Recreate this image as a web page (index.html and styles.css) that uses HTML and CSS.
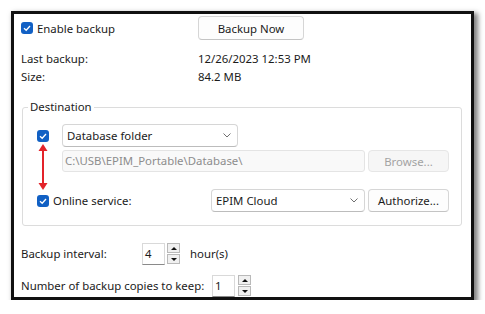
FILE: index.html
```html
<!DOCTYPE html>
<html lang="en">
<head>
  <meta charset="UTF-8" />
  <title>Backup settings</title>
  <link rel="stylesheet" href="styles.css">
</head>
<body>

  <div class="panel">

    <div class="summary">
      <label class="check">
        <span class="box"><svg viewBox="0 0 12 12"><polyline points="3,6.2 5.2,8.3 9,4" /></svg></span>
        Enable backup
      </label>
      <button class="btn now">Backup Now</button>

      <div class="info">Last backup:</div>
      <div class="info">12/26/2023 12:53 PM</div>
      <div class="info">Size:</div>
      <div class="info">84.2 MB</div>
    </div>

    <fieldset class="destination">
      <legend>Destination</legend>
      <div class="dest-rows">
        <div class="row">
          <span class="box"><svg viewBox="0 0 12 12"><polyline points="3,6.2 5.2,8.3 9,4" /></svg></span>
          <div class="select folder">
            <span>Database folder</span>
            <svg class="chev" viewBox="0 0 8 5"><polyline points="0.5,0.5 4,4 7.5,0.5" /></svg>
          </div>
        </div>

        <div class="row path-row">
          <div class="path">C:\USB\EPIM_Portable\Database\</div>
          <button class="btn browse" disabled>Browse...</button>
        </div>

        <div class="row online">
          <label class="check">
            <span class="box"><svg viewBox="0 0 12 12"><polyline points="3,6.2 5.2,8.3 9,4" /></svg></span>
            <span class="online-label">Online service:</span>
          </label>
          <div class="select cloud">
            <span>EPIM Cloud</span>
            <svg class="chev" viewBox="0 0 8 5"><polyline points="0.5,0.5 4,4 7.5,0.5" /></svg>
          </div>
          <button class="btn auth">Authorize...</button>
        </div>

        <!-- annotation arrow between the two checkboxes -->
        <svg class="arrow" viewBox="0 0 10 46">
          <polygon points="5,0 0.5,7 9.5,7" />
          <line x1="5" y1="6" x2="5" y2="40" />
          <polygon points="5,46 0.5,39 9.5,39" />
        </svg>
      </div>
    </fieldset>

    <div class="spin-row interval">
      <span class="spin-label">Backup interval:</span>
      <div class="spin-box">4</div>
      <div class="spinner">
        <span class="up"></span>
        <span class="down"></span>
      </div>
      <span class="unit">hour(s)</span>
    </div>

    <div class="spin-row copies">
      <span class="spin-label">Number of backup copies to keep:</span>
      <div class="spin-box">1</div>
      <div class="spinner">
        <span class="up"></span>
        <span class="down"></span>
      </div>
    </div>

  </div>

</body>
</html>
```

FILE: styles.css
```css
* {
  margin: 0;
  padding: 0;
  box-sizing: border-box;
  font-family: 'Noto Sans', 'Open Sans', sans-serif;
}
body {
  background: #fff;
  color: #1b1b1b;
  font-size: 11.4px;
}
.panel {
  margin: 11px 0 0 11px;
  width: 463px;
  height: 289px;
  border: 3px solid #111;
  background: #fff;
  box-shadow: 3px 3px 5px 1px rgba(0,0,0,0.5);
  overflow: hidden;
}

/* top block */
.summary {
  display: grid;
  grid-template-columns: 177px auto;
  align-items: center;
  padding: 2px 0 0 7px;
}
.check {
  display: flex;
  align-items: center;
  gap: 4px;
  white-space: nowrap;
}
.box {
  width: 12px;
  height: 12px;
  border-radius: 3px;
  background: #1160c4;
  display: flex;
  flex-shrink: 0;
}
.box svg {
  width: 12px;
  height: 12px;
  fill: none;
  stroke: #fff;
  stroke-width: 1.3;
}
.btn {
  height: 24px;
  border: 1px solid #d6d6d6;
  border-bottom-color: #c4c4c4;
  border-radius: 4px;
  background: #fdfdfd;
  color: #1b1b1b;
  font-size: 11.4px;
}
.now {
  width: 106px;
}
.info {
  line-height: 18px;
}
.summary .info:nth-child(3),
.summary .info:nth-child(4) {
  margin-top: 10px;
}

/* destination group */
.destination {
  margin: 13px 9px 0 8px;
  border: 1px solid #dcdcdc;
  border-radius: 3px;
  padding: 9px 0 13px 5px;
}
.destination legend {
  padding: 0 2px;
  line-height: 16px;
}
.dest-rows {
  position: relative;
  padding-left: 9px;
}
.row {
  display: flex;
  align-items: center;
}
.select {
  height: 23px;
  margin-left: 13px;
  border: 1px solid #d6d6d6;
  border-bottom-color: #bcbcbc;
  border-radius: 4px;
  background: #fff;
  display: flex;
  align-items: center;
  justify-content: space-between;
  padding: 0 6px 0 4px;
}
.folder {
  width: 176px;
}
.chev {
  width: 8px;
  height: 5px;
  fill: none;
  stroke: #707070;
  stroke-width: 1;
}
.path-row {
  margin-top: 3px;
  padding-left: 25px;
}
.path {
  width: 303px;
  height: 22px;
  line-height: 20px;
  padding-left: 2px;
  border: 1px solid #e4e4e4;
  border-radius: 3px;
  background: #f9f9f9;
  color: #8d8d8d;
}
.browse {
  width: 81px;
  height: 22px;
  margin-left: 3px;
  background: #f6f6f6;
  border-color: #e6e6e6;
  color: #a3a3a3;
}
.online {
  margin-top: 17px;
}
.online-label {
  width: 158px;
}
.online .select {
  margin-left: 0;
}
.cloud {
  width: 154px;
}
.auth {
  width: 81px;
  height: 23px;
  margin-left: 3px;
}
.arrow {
  position: absolute;
  left: 10px;
  top: 20px;
  width: 10px;
  height: 46px;
}
.arrow polygon {
  fill: #e3232a;
}
.arrow line {
  stroke: #e3232a;
  stroke-width: 2;
}

/* spin edits */
.spin-row {
  display: flex;
  align-items: flex-start;
  padding-left: 7px;
  white-space: nowrap;
}
.interval {
  margin-top: 17px;
}
.copies {
  margin-top: 10px;
}
.spin-label {
  line-height: 22px;
}
.interval .spin-label {
  width: 121px;
}
.copies .spin-label {
  width: 191px;
}
.spin-box {
  width: 23px;
  height: 22px;
  line-height: 20px;
  padding-left: 2px;
  border: 1px solid #d9d9d9;
  border-bottom-color: #8a8a8a;
  background: #fff;
}
.spinner {
  display: flex;
  flex-direction: column;
  gap: 1px;
  margin-left: 2px;
}
.copies .spinner {
  margin-left: 3px;
}
.spinner span {
  width: 13px;
  height: 10px;
  border: 1px solid #b9b9b9;
  background: #f0f0f0;
  display: flex;
  align-items: center;
  justify-content: center;
}
.spinner span::after {
  content: '';
  border-left: 3px solid transparent;
  border-right: 3px solid transparent;
}
.spinner .up::after {
  border-bottom: 3px solid #111;
}
.spinner .down::after {
  border-top: 3px solid #111;
}
.unit {
  line-height: 22px;
  margin-left: 10px;
}
```
